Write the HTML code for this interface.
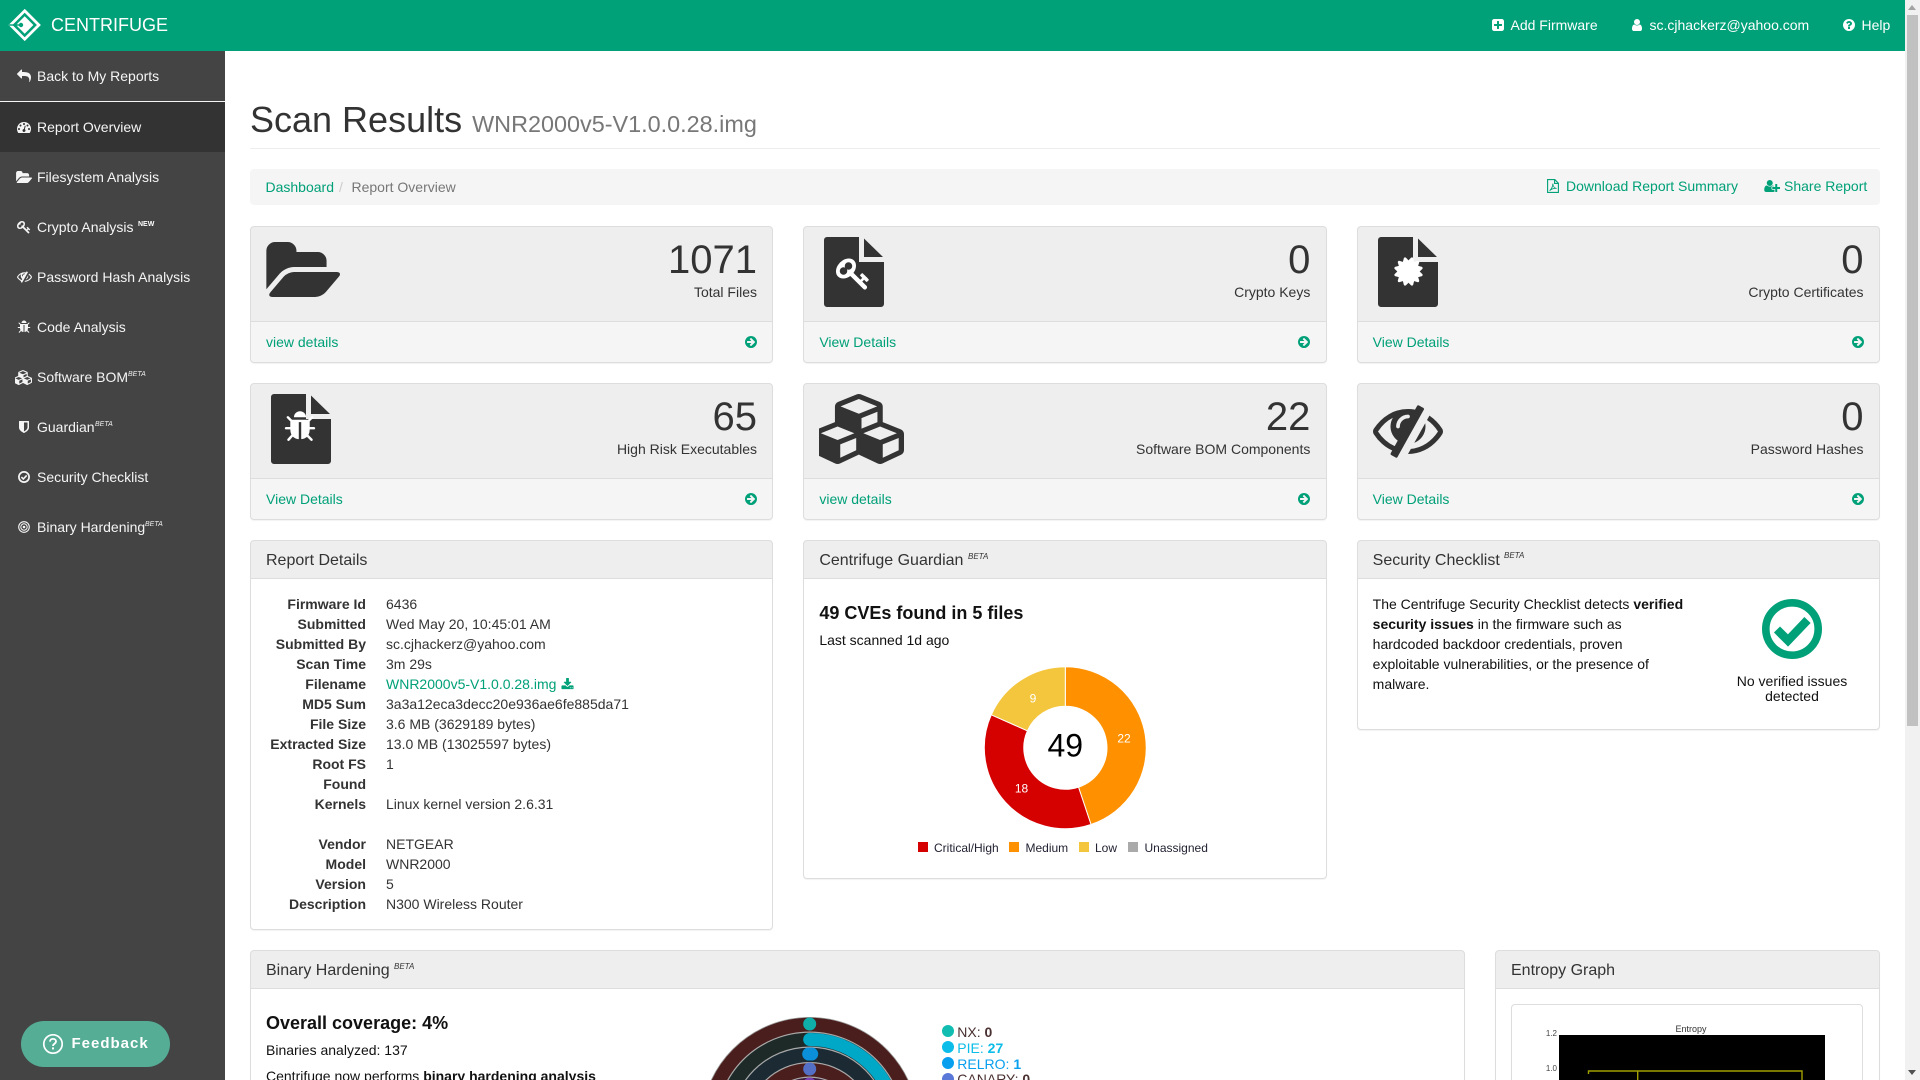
<!DOCTYPE html>
<html lang="en"><head><meta charset="utf-8"><title>Centrifuge - Scan Results</title>
<style>
html,body{margin:0;padding:0;background:#fff;width:1920px;height:1080px;overflow:hidden}
#root{position:absolute;left:0;top:0;width:1920px;height:1080px;overflow:hidden;font:14px/20px "Liberation Sans",sans-serif;color:#333}
.a{position:absolute}
.t{position:absolute;white-space:nowrap;line-height:20px}
.r{text-align:right}
.s{position:absolute;display:block}
.g{color:#00a078}
.w{color:#f5f5f5}
.p{position:absolute;box-sizing:border-box;border:1px solid #ddd;border-radius:4px;box-shadow:0 1px 1px rgba(0,0,0,.05);background:#fff}
.st{height:137px;width:523.33px;background:linear-gradient(#eee 0,#eee 94px,#ddd 94px,#ddd 95px,#f5f5f5 95px)}
.hd{background:linear-gradient(#eee 0,#eee 37px,#ddd 37px,#ddd 38px,#fff 38px)}
.n{position:absolute;font-size:40px;line-height:40px;text-align:right;white-space:nowrap;color:#333}
.h{position:absolute;font-size:16px;line-height:20px;white-space:nowrap;color:#333}
.b{position:absolute;font:italic 8px/10px "Liberation Sans",sans-serif;color:#333;white-space:nowrap}
.sb{position:absolute;font:italic 7px/9px "Liberation Sans",sans-serif;color:#eee;white-space:nowrap}
.dt{position:absolute;left:250px;width:116px;text-align:right;font-weight:700;line-height:20px;white-space:nowrap}
.dd{position:absolute;left:386px;line-height:20px;white-space:nowrap}
</style></head><body><div id="root">

<!-- navbar -->
<div class="a" style="left:0;top:0;width:1905px;height:51px;background:#00a078"></div>
<svg class="s" style="left:0;top:0" width="60" height="50" viewBox="0 0 60 50">
<path d="M24.7 10.8 L38.9 25 L24.7 39.2 L10.5 25 Z" fill="none" stroke="#fff" stroke-width="2.8"/>
<path d="M24.7 16.3 L33.4 25 L24.7 33.7 L16 25 Z" fill="#fff"/>
<path d="M9 25 H19" stroke="#00a078" stroke-width="1.4"/>
<circle cx="21" cy="25" r="2.2" fill="#00a078"/>
</svg>
<div class="t" style="left:51px;top:15px;font-size:18px;color:#fff">CENTRIFUGE</div>

<svg class="s" style="left:1492px;top:19px" width="12" height="12" viewBox="128 128 1536 1536"><path fill="#fff" fill-rule="evenodd" d="M1408 960v-128q0-26-19-45t-45-19h-320v-320q0-26-19-45t-45-19h-128q-26 0-45 19t-19 45v320h-320q-26 0-45 19t-19 45v128q0 26 19 45t45 19h320v320q0 26 19 45t45 19h128q26 0 45-19t19-45v-320h320q26 0 45-19t19-45zm256-544v960q0 119-84.5 203.5t-203.5 84.5h-960q-119 0-203.5-84.5t-84.5-203.5v-960q0-119 84.5-203.5t203.5-84.5h960q119 0 203.5 84.5t84.5 203.5z"/></svg>
<div class="t" style="left:1510.5px;top:15px;color:#fff">Add Firmware</div>
<svg class="s" style="left:1632px;top:19px" width="10" height="12" viewBox="256 128 1280 1536"><path fill="#fff" d="M1536 1399q0 109-62.5 187t-150.5 78h-854q-88 0-150.5-78t-62.5-187q0-85 8.5-160.5t31.5-152 58.5-131 94-89 134.5-34.5q131 128 313 128t313-128q76 0 134.5 34.5t94 89 58.5 131 31.5 152 8.5 160.5zm-256-887q0 159-112.5 271.5t-271.5 112.5-271.5-112.5-112.5-271.5 112.5-271.5 271.5-112.5 271.5 112.5 112.5 271.5z"/></svg>
<div class="t" style="left:1649.5px;top:15px;color:#fff">sc.cjhackerz@yahoo.com</div>
<svg class="s" style="left:1842.5px;top:19px" width="12" height="12" viewBox="128 128 1536 1536"><path fill="#fff" fill-rule="evenodd" d="M1024 1376v-192q0-14-9-23t-23-9h-192q-14 0-23 9t-9 23v192q0 14 9 23t23 9h192q14 0 23-9t9-23zm256-672q0-88-55.5-163t-138.5-116-170-41q-243 0-371 213-15 24 8 42l132 100q7 6 19 6 16 0 25-12 53-68 86-92 34-24 86-24 48 0 85.5 26t37.5 59q0 38-20 61t-68 45q-63 28-115.5 86.5t-52.5 125.5v36q0 14 9 23t23 9h192q14 0 23-9t9-23q0-19 21.5-49.5t54.5-49.5q32-18 49-28.5t46-35 44.5-48 28-60.5 12.5-81zm384 192q0 209-103 385.5t-279.5 279.5-385.5 103-385.5-103-279.5-279.5-103-385.5 103-385.5 279.5-279.5 385.5-103 385.5 103 279.5 279.5 103 385.5z"/></svg>
<div class="t" style="left:1861.5px;top:15px;color:#fff">Help</div>

<!-- scrollbar -->
<div class="a" style="left:1905px;top:0;width:15px;height:1080px;background:#f1f1f1"></div>
<div class="a" style="left:1907px;top:15px;width:11px;height:711px;background:#c1c1c1"></div>
<div class="a" style="left:1908px;top:5px;width:0;height:0;border:4.5px solid transparent;border-top:0;border-bottom:5px solid #a3a3a3"></div>
<div class="a" style="left:1908px;top:1070px;width:0;height:0;border:4.5px solid transparent;border-bottom:0;border-top:5px solid #505050"></div>

<!-- sidebar -->
<div class="a" style="left:0;top:51px;width:225px;height:1029px;background:#444"></div>
<div class="a" style="left:0;top:101px;width:225px;height:1px;background:#f5f5f5"></div>
<div class="a" style="left:0;top:102px;width:225px;height:50px;background:#333"></div>

<svg class="s" style="left:17px;top:69px" width="14" height="14" viewBox="0 0 1792 1792"><path fill="#f5f5f5" d="M1792 1120q0 166-127 451-3 7-10.5 24t-13.5 30-13 22q-12 17-28 17-15 0-23.5-10t-8.5-25q0-9 2.5-26.5t2.5-23.5q5-68 5-123 0-101-17.5-181t-48.5-138.5-80-101-105.5-69.5-133-42.5-154-21.5-175.5-6h-224v256q0 26-19 45t-45 19-45-19l-512-512q-19-19-19-45t19-45l512-512q19-19 45-19t45 19 19 45v256h224q713 0 875 403 53 134 53 333z"/></svg>
<div class="t w" style="left:37px;top:66px">Back to My Reports</div>

<svg class="s" style="left:17px;top:120px" width="14" height="14" viewBox="0 0 1792 1792"><path fill="#f5f5f5" fill-rule="evenodd" d="M384 1152q0-53-37.5-90.5t-90.5-37.5-90.5 37.5-37.5 90.5 37.5 90.5 90.5 37.5 90.5-37.5 37.5-90.5zm192-448q0-53-37.5-90.5t-90.5-37.5-90.5 37.5-37.5 90.5 37.5 90.5 90.5 37.5 90.5-37.5 37.5-90.5zm428 481l101-382q6-26-7.5-48.5t-38.5-29.5-48 6.5-30 39.5l-101 382q-60 5-107 43.5t-63 98.5q-20 77 20 146t117 89 146-20 89-117q16-60-6-117t-72-91zm660-33q0-53-37.5-90.5t-90.5-37.5-90.5 37.5-37.5 90.5 37.5 90.5 90.5 37.5 90.5-37.5 37.5-90.5zm-640-640q0-53-37.5-90.5t-90.5-37.5-90.5 37.5-37.5 90.5 37.5 90.5 90.5 37.5 90.5-37.5 37.5-90.5zm448 192q0-53-37.5-90.5t-90.5-37.5-90.5 37.5-37.5 90.5 37.5 90.5 90.5 37.5 90.5-37.5 37.5-90.5zm320 448q0 261-141 483-19 29-54 29h-1402q-35 0-54-29-141-221-141-483 0-182 71-348t191-286 286-191 348-71 348 71 286 191 191 286 71 348z"/></svg>
<div class="t w" style="left:37px;top:117px">Report Overview</div>

<svg class="s" style="left:16px;top:171px" width="16" height="12" viewBox="55 128 1888 1408" preserveAspectRatio="none"><path fill="#f5f5f5" d="M1943 952q0 31-31 66l-336 396q-43 51-120.5 86.5t-143.5 35.5h-1088q-34 0-60.5-13t-26.5-43q0-31 31-66l336-396q43-51 120.5-86.5t143.5-35.5h1088q34 0 60.5 13t26.5 43zm-343-344v160h-832q-94 0-197 47.5t-164 119.5l-337 396-5 6q0-4-.5-12.5t-.5-12.5v-960q0-92 66-158t158-66h320q92 0 158 66t66 158v32h544q92 0 158 66t66 158z"/></svg>
<div class="t w" style="left:37px;top:167px">Filesystem Analysis</div>

<svg class="s" style="left:17px;top:220px" width="14" height="14" viewBox="0 0 1792 1792"><path fill="#f5f5f5" fill-rule="evenodd" d="M832 512q0-80-56-136t-136-56-136 56-56 136q0 42 19 83-41-19-83-19-80 0-136 56t-56 136 56 136 136 56 136-56 56-136q0-42-19-83 41 19 83 19 80 0 136-56t56-136zm851 704q0 17-49 66t-66 49q-9 0-28.5-16t-36.5-33-38.5-40-24.5-26l-96 96 220 220q28 28 28 68 0 42-39 81t-81 39q-40 0-68-28l-671-671q-176 131-365 131-163 0-265.5-102.5t-102.5-265.5q0-160 95-313t248-248 313-95q163 0 265.5 102.5t102.5 265.5q0 189-131 365l355 355 96-96q-3-3-26-24.5t-40-38.5-33-36.5-16-28.5q0-17 49-66t66-49q13 0 23 10 6 6 46 44.5t82 79.5 86.5 86 73 78 28.5 41z"/></svg>
<div class="t w" style="left:37px;top:217px">Crypto Analysis</div>
<div class="sb" style="left:138px;top:220px;font-style:normal;font-weight:700;color:#fff">NEW</div>

<svg class="s" style="left:16.5px;top:269px" width="15" height="15" viewBox="0 0 1792 1792"><path fill="#f5f5f5" d="M555 1335l78-141q-87-63-136-159t-49-203q0-121 61-225-229 117-381 353 167 258 427 375zm389-759q0-20-14-34t-34-14q-125 0-214.5 89.5t-89.5 214.5q0 20 14 34t34 14 34-14 14-34q0-86 61-147t147-61q20 0 34-14t14-34zm363-191q0 7-1 9-106 189-316 567t-315 566l-49 89q-10 16-28 16-12 0-134-70-16-10-16-28 0-12 44-87-143-65-263.5-173t-208.5-245q-20-31-20-69t20-69q153-235 380-371t496-136q89 0 180 17l54-97q10-16 28-16 5 0 18 6t31 15.5 33 18.5 31.5 18.5 19.5 11.5q16 10 16 27zm37 447q0 139-79 253.5t-209 164.5l280-502q8 45 8 84zm448 128q0 35-20 69-39 64-109 145-150 172-347.5 267t-419.5 95l74-132q212-18 392.5-137t301.5-307q-115-179-282-294l63-112q95 64 182.5 153t144.5 184q20 34 20 69z"/></svg>
<div class="t w" style="left:37px;top:267px">Password Hash Analysis</div>

<svg class="s" style="left:17px;top:320px" width="14" height="14" viewBox="0 0 1792 1792"><path fill="#f5f5f5" d="M1696 960q0 26-19 45t-45 19h-224q0 171-67 290l208 209q19 19 19 45t-19 45q-18 19-45 19t-45-19l-198-197q-5 5-15 13t-42 28.5-65 36.5-82 29-97 13v-896h-128v896q-51 0-101.5-13.5t-87-33-66-39-43.5-32.5l-15-14-183 207q-20 21-48 21-24 0-43-16-19-18-20.5-44.5t15.5-46.5l202-227q-58-114-58-274h-224q-26 0-45-19t-19-45 19-45 45-19h224v-294l-173-173q-19-19-19-45t19-45 45-19 45 19l173 173h844l173-173q19-19 45-19t45 19 19 45-19 45l-173 173v294h224q26 0 45 19t19 45zm-480-576h-640q0-133 93.5-226.5t226.5-93.5 226.5 93.5 93.5 226.5z"/></svg>
<div class="t w" style="left:37px;top:317px">Code Analysis</div>

<svg class="s" style="left:15px;top:370px" width="17" height="15" viewBox="0 0 2048 1792"><path fill="#f5f5f5" fill-rule="evenodd" d="M512 1632l384-192v-314l-384 164v342zm-64-454l404-173-404-173-404 173zm1088 454l384-192v-314l-384 164v342zm-64-454l404-173-404-173-404 173zm-448-293l384-165v-266l-384 164v267zm-64-379l441-189-441-189-441 189zm1088 518v416q0 36-19 67t-52 47l-448 224q-25 14-57 14t-57-14l-448-224q-4-2-7-4-2 2-7 4l-448 224q-25 14-57 14t-57-14l-448-224q-33-16-52-47t-19-67v-416q0-38 21.5-70t56.5-48l434-186v-400q0-38 21.5-70t56.5-48l448-192q23-10 50-10t50 10l448 192q35 16 56.5 48t21.5 70v400l434 186q36 16 57 48t21 70z"/></svg>
<div class="t w" style="left:37px;top:367px">Software BOM</div>
<div class="sb" style="left:128px;top:370px">BETA</div>

<svg class="s" style="left:17px;top:420px" width="14" height="14" viewBox="0 0 1792 1792"><path fill="#f5f5f5" fill-rule="evenodd" d="M1344 960v-640h-448v1137q119-63 213-137 235-184 235-360zm192-768v768q0 86-33.5 170.5t-83 150-118 127.5-126.5 103-121 77.5-89.5 49.5-42.5 20q-12 6-26 6t-26-6q-16-7-42.5-20t-89.5-49.5-121-77.5-126.5-103-118-127.5-83-150-33.5-170.5v-768q0-26 19-45t45-19h1152q26 0 45 19t19 45z"/></svg>
<div class="t w" style="left:37px;top:417px">Guardian</div>
<div class="sb" style="left:95px;top:420px">BETA</div>

<svg class="s" style="left:18px;top:471px" width="12" height="12" viewBox="0 0 12 12"><circle cx="6" cy="6" r="5.1" fill="none" stroke="#f5f5f5" stroke-width="1.7"/><path d="M3.4 6.1 L5.3 8 L8.7 4.4" fill="none" stroke="#f5f5f5" stroke-width="1.6"/></svg>
<div class="t w" style="left:37px;top:467px">Security Checklist</div>

<svg class="s" style="left:18px;top:521px" width="12" height="12" viewBox="0 0 12 12"><circle cx="6" cy="6" r="5.3" fill="none" stroke="#f5f5f5" stroke-width="1.1"/><circle cx="6" cy="6" r="3.2" fill="none" stroke="#f5f5f5" stroke-width="1"/><circle cx="6" cy="6" r="1.3" fill="#f5f5f5"/></svg>
<div class="t w" style="left:37px;top:517px">Binary Hardening</div>
<div class="sb" style="left:145px;top:520px">BETA</div>

<!-- feedback -->
<div class="a" style="left:21px;top:1021px;width:149px;height:46px;border-radius:23px;background:#55ad96"></div>
<svg class="s" style="left:42px;top:1033px" width="22" height="22" viewBox="0 0 22 22"><circle cx="11" cy="11" r="9.2" fill="none" stroke="#fff" stroke-width="1.7"/><path d="M8 8.6c0-1.8 1.4-2.7 3-2.7s3 1 3 2.5c0 2.4-3 2.3-3 4.6" fill="none" stroke="#fff" stroke-width="1.8"/><rect x="10" y="14.4" width="2" height="2" fill="#fff"/></svg>
<div class="t" style="left:71.5px;top:1034px;font-size:15px;font-weight:700;letter-spacing:1px;color:#fff">Feedback</div>

<!-- title -->
<div class="a" style="left:250px;top:100px;font-size:36px;line-height:40px;white-space:nowrap">Scan Results <span style="font-size:23.4px;color:#777">WNR2000v5-V1.0.0.28.img</span></div>
<div class="a" style="left:250px;top:148px;width:1630px;height:1px;background:#eee"></div>

<!-- breadcrumb -->
<div class="a" style="left:250px;top:169px;width:1630px;height:36px;background:#f5f5f5;border-radius:4px"></div>
<div class="t g" style="left:265.5px;top:177px">Dashboard</div>
<div class="t" style="left:339px;top:177px;color:#ccc">/</div>
<div class="t" style="left:351.5px;top:177px;color:#777">Report Overview</div>
<svg class="s" style="left:1547px;top:179px" width="12" height="14" viewBox="0 0 12 14"><path d="M.6.6H7.8L11.4 4.2V13.4H.6Z M7.6.8V4.4H11.2" fill="none" stroke="#00a078" stroke-width="1.1"/><path d="M2.6 11.6C4.6 10 6 7 5.8 4.6 6 7.4 7.6 9.2 9.6 9.4 7.4 9.2 4.6 10 2.6 11.6Z" fill="none" stroke="#00a078" stroke-width=".9"/></svg>
<div class="t g" style="left:1566px;top:176px">Download Report Summary</div>
<svg class="s" style="left:1763.5px;top:179px" width="16.5" height="14" viewBox="0 0 2048 1792"><path fill="#00a078" d="M704 896q-159 0-271.5-112.5t-112.5-271.5 112.5-271.5 271.5-112.5 271.5 112.5 112.5 271.5-112.5 271.5-271.5 112.5zm960 128h352q13 0 22.5 9.5t9.5 22.5v192q0 13-9.5 22.5t-22.5 9.5h-352v352q0 13-9.5 22.5t-22.5 9.5h-192q-13 0-22.5-9.5t-9.5-22.5v-352h-352q-13 0-22.5-9.5t-9.5-22.5v-192q0-13 9.5-22.5t22.5-9.5h352v-352q0-13 9.5-22.5t22.5-9.5h192q13 0 22.5 9.5t9.5 22.5v352zm-736 224q0 52 38 90t90 38h256v238q-68 50-171 50h-874q-121 0-194-69t-73-190q0-53 3.5-103.5t14-109 26.5-108.5 43-97.5 62-81 85.5-53.5 111.5-20q19 0 39 17 79 61 154.5 91.5t164.5 30.5 164.5-30.5 154.5-91.5q20-17 39-17 132 0 217 96h-223q-52 0-90 38t-38 90v192z"/></svg>
<div class="t g" style="left:1784px;top:176px">Share Report</div>

<!-- stat panels -->
<div class="p st" style="left:250px;top:226px"></div>
<div class="p st" style="left:803.33px;top:226px"></div>
<div class="p st" style="left:1356.67px;top:226px"></div>
<div class="p st" style="left:250px;top:383px"></div>
<div class="p st" style="left:803.33px;top:383px"></div>
<div class="p st" style="left:1356.67px;top:383px"></div>

<svg class="s" style="left:266px;top:242px" width="74" height="55" viewBox="55 128 1888 1408" preserveAspectRatio="none"><path fill="#333" d="M1943 952q0 31-31 66l-336 396q-43 51-120.5 86.5t-143.5 35.5h-1088q-34 0-60.5-13t-26.5-43q0-31 31-66l336-396q43-51 120.5-86.5t143.5-35.5h1088q34 0 60.5 13t26.5 43zm-343-344v160h-832q-94 0-197 47.5t-164 119.5l-337 396-5 6q0-4-.5-12.5t-.5-12.5v-960q0-92 66-158t158-66h320q92 0 158 66t66 158v32h544q92 0 158 66t66 158z"/></svg>
<div class="n" style="right:1163px;top:240px">1071</div>
<div class="t r" style="right:1163px;top:282px">Total Files</div>
<div class="t g" style="left:266px;top:332px">view details</div>
<svg class="s" style="left:745px;top:336px" width="12" height="12" viewBox="128 128 1536 1536"><path fill="#00a078" fill-rule="evenodd" d="M1413 896q0-27-18-45l-91-91-362-362q-18-18-45-18t-45 18l-91 91q-18 18-18 45t18 45l189 189h-502q-26 0-45 19t-19 45v128q0 26 19 45t45 19h502l-189 189q-19 19-19 45t19 45l91 91q18 18 45 18t45-18l362-362 91-91q18-18 18-45zm251 0q0 209-103 385.5t-279.5 279.5-385.5 103-385.5-103-279.5-279.5-103-385.5 103-385.5 279.5-279.5 385.5-103 385.5 103 279.5 279.5 103 385.5z"/></svg>

<svg class="s" style="left:824px;top:237px" width="60" height="70" viewBox="0 0 60 70"><path fill="#333" d="M3 0H35V25H60V67a3 3 0 0 1-3 3H3a3 3 0 0 1-3-3V3a3 3 0 0 1 3-3Z"/><path fill="#333" d="M40 1.5 59 20H40Z"/></svg>
<svg class="s" style="left:836px;top:256px" width="35" height="35" viewBox="0 0 1792 1792"><path fill="#fff" fill-rule="evenodd" d="M832 512q0-80-56-136t-136-56-136 56-56 136q0 42 19 83-41-19-83-19-80 0-136 56t-56 136 56 136 136 56 136-56 56-136q0-42-19-83 41 19 83 19 80 0 136-56t56-136zm851 704q0 17-49 66t-66 49q-9 0-28.5-16t-36.5-33-38.5-40-24.5-26l-96 96 220 220q28 28 28 68 0 42-39 81t-81 39q-40 0-68-28l-671-671q-176 131-365 131-163 0-265.5-102.5t-102.5-265.5q0-160 95-313t248-248 313-95q163 0 265.5 102.5t102.5 265.5q0 189-131 365l355 355 96-96q-3-3-26-24.5t-40-38.5-33-36.5-16-28.5q0-17 49-66t66-49q13 0 23 10 6 6 46 44.5t82 79.5 86.5 86 73 78 28.5 41z"/></svg>
<div class="n" style="right:609.67px;top:240px">0</div>
<div class="t r" style="right:609.67px;top:282px">Crypto Keys</div>
<div class="t g" style="left:819.33px;top:332px">View Details</div>
<svg class="s" style="left:1298.2px;top:336px" width="12" height="12" viewBox="128 128 1536 1536"><path fill="#00a078" fill-rule="evenodd" d="M1413 896q0-27-18-45l-91-91-362-362q-18-18-45-18t-45 18l-91 91q-18 18-18 45t18 45l189 189h-502q-26 0-45 19t-19 45v128q0 26 19 45t45 19h502l-189 189q-19 19-19 45t19 45l91 91q18 18 45 18t45-18l362-362 91-91q18-18 18-45zm251 0q0 209-103 385.5t-279.5 279.5-385.5 103-385.5-103-279.5-279.5-103-385.5 103-385.5 279.5-279.5 385.5-103 385.5 103 279.5 279.5 103 385.5z"/></svg>

<svg class="s" style="left:1378px;top:237px" width="60" height="70" viewBox="0 0 60 70"><path fill="#333" d="M3 0H35V25H60V67a3 3 0 0 1-3 3H3a3 3 0 0 1-3-3V3a3 3 0 0 1 3-3Z"/><path fill="#333" d="M40 1.5 59 20H40Z"/></svg>
<svg class="s" style="left:1391.5px;top:254.5px" width="33" height="33" viewBox="0 0 1792 1792"><path fill="#fff" d="M1504 896l138 135q30 28 20 70-12 41-52 51l-188 48 53 186q12 41-19 70-29 31-70 19l-186-53-48 188q-10 40-51 52-12 2-19 2-31 0-51-22l-135-138-135 138q-28 30-70 20-41-11-51-52l-48-188-186 53q-41 12-70-19-31-29-19-70l53-186-188-48q-40-10-52-51-10-42 20-70l138-135-138-135q-30-28-20-70 12-41 52-51l188-48-53-186q-12-41 19-70 29-31 70-19l186 53 48-188q10-41 51-51 41-12 70 19l135 139 135-139q29-30 70-19 41 10 51 51l48 188 186-53q41-12 70 19 31 29 19 70l-53 186 188 48q40 10 52 51 10 42-20 70z"/></svg>
<div class="n" style="right:56.5px;top:240px">0</div>
<div class="t r" style="right:56.5px;top:282px">Crypto Certificates</div>
<div class="t g" style="left:1372.67px;top:332px">View Details</div>
<svg class="s" style="left:1852px;top:336px" width="12" height="12" viewBox="128 128 1536 1536"><path fill="#00a078" fill-rule="evenodd" d="M1413 896q0-27-18-45l-91-91-362-362q-18-18-45-18t-45 18l-91 91q-18 18-18 45t18 45l189 189h-502q-26 0-45 19t-19 45v128q0 26 19 45t45 19h502l-189 189q-19 19-19 45t19 45l91 91q18 18 45 18t45-18l362-362 91-91q18-18 18-45zm251 0q0 209-103 385.5t-279.5 279.5-385.5 103-385.5-103-279.5-279.5-103-385.5 103-385.5 279.5-279.5 385.5-103 385.5 103 279.5 279.5 103 385.5z"/></svg>

<svg class="s" style="left:271px;top:394px" width="60" height="70" viewBox="0 0 60 70"><path fill="#333" d="M3 0H35V25H60V67a3 3 0 0 1-3 3H3a3 3 0 0 1-3-3V3a3 3 0 0 1 3-3Z"/><path fill="#333" d="M40 1.5 59 20H40Z"/></svg>
<svg class="s" style="left:283px;top:410px" width="34" height="34" viewBox="0 0 1792 1792"><path fill="#fff" d="M1696 960q0 26-19 45t-45 19h-224q0 171-67 290l208 209q19 19 19 45t-19 45q-18 19-45 19t-45-19l-198-197q-5 5-15 13t-42 28.5-65 36.5-82 29-97 13v-896h-128v896q-51 0-101.5-13.5t-87-33-66-39-43.5-32.5l-15-14-183 207q-20 21-48 21-24 0-43-16-19-18-20.5-44.5t15.5-46.5l202-227q-58-114-58-274h-224q-26 0-45-19t-19-45 19-45 45-19h224v-294l-173-173q-19-19-19-45t19-45 45-19 45 19l173 173h844l173-173q19-19 45-19t45 19 19 45-19 45l-173 173v294h224q26 0 45 19t19 45zm-480-576h-640q0-133 93.5-226.5t226.5-93.5 226.5 93.5 93.5 226.5z"/></svg>
<div class="n" style="right:1163px;top:397px">65</div>
<div class="t r" style="right:1163px;top:439px">High Risk Executables</div>
<div class="t g" style="left:266px;top:489px">View Details</div>
<svg class="s" style="left:745px;top:493px" width="12" height="12" viewBox="128 128 1536 1536"><path fill="#00a078" fill-rule="evenodd" d="M1413 896q0-27-18-45l-91-91-362-362q-18-18-45-18t-45 18l-91 91q-18 18-18 45t18 45l189 189h-502q-26 0-45 19t-19 45v128q0 26 19 45t45 19h502l-189 189q-19 19-19 45t19 45l91 91q18 18 45 18t45-18l362-362 91-91q18-18 18-45zm251 0q0 209-103 385.5t-279.5 279.5-385.5 103-385.5-103-279.5-279.5-103-385.5 103-385.5 279.5-279.5 385.5-103 385.5 103 279.5 279.5 103 385.5z"/></svg>

<svg class="s" style="left:819px;top:394px" width="85" height="70" viewBox="0 0 2048 1792" preserveAspectRatio="none"><path fill="#333" fill-rule="evenodd" d="M512 1632l384-192v-314l-384 164v342zm-64-454l404-173-404-173-404 173zm1088 454l384-192v-314l-384 164v342zm-64-454l404-173-404-173-404 173zm-448-293l384-165v-266l-384 164v267zm-64-379l441-189-441-189-441 189zm1088 518v416q0 36-19 67t-52 47l-448 224q-25 14-57 14t-57-14l-448-224q-4-2-7-4-2 2-7 4l-448 224q-25 14-57 14t-57-14l-448-224q-33-16-52-47t-19-67v-416q0-38 21.5-70t56.5-48l434-186v-400q0-38 21.5-70t56.5-48l448-192q23-10 50-10t50 10l448 192q35 16 56.5 48t21.5 70v400l434 186q36 16 57 48t21 70z"/></svg>
<div class="n" style="right:609.67px;top:397px">22</div>
<div class="t r" style="right:609.67px;top:439px">Software BOM Components</div>
<div class="t g" style="left:819.33px;top:489px">view details</div>
<svg class="s" style="left:1298.2px;top:493px" width="12" height="12" viewBox="128 128 1536 1536"><path fill="#00a078" fill-rule="evenodd" d="M1413 896q0-27-18-45l-91-91-362-362q-18-18-45-18t-45 18l-91 91q-18 18-18 45t18 45l189 189h-502q-26 0-45 19t-19 45v128q0 26 19 45t45 19h502l-189 189q-19 19-19 45t19 45l91 91q18 18 45 18t45-18l362-362 91-91q18-18 18-45zm251 0q0 209-103 385.5t-279.5 279.5-385.5 103-385.5-103-279.5-279.5-103-385.5 103-385.5 279.5-279.5 385.5-103 385.5 103 279.5 279.5 103 385.5z"/></svg>

<svg class="s" style="left:1372.5px;top:394px" width="70" height="70" viewBox="0 0 1792 1792"><path fill="#333" d="M555 1335l78-141q-87-63-136-159t-49-203q0-121 61-225-229 117-381 353 167 258 427 375zm389-759q0-20-14-34t-34-14q-125 0-214.5 89.5t-89.5 214.5q0 20 14 34t34 14 34-14 14-34q0-86 61-147t147-61q20 0 34-14t14-34zm363-191q0 7-1 9-106 189-316 567t-315 566l-49 89q-10 16-28 16-12 0-134-70-16-10-16-28 0-12 44-87-143-65-263.5-173t-208.5-245q-20-31-20-69t20-69q153-235 380-371t496-136q89 0 180 17l54-97q10-16 28-16 5 0 18 6t31 15.5 33 18.5 31.5 18.5 19.5 11.5q16 10 16 27zm37 447q0 139-79 253.5t-209 164.5l280-502q8 45 8 84zm448 128q0 35-20 69-39 64-109 145-150 172-347.5 267t-419.5 95l74-132q212-18 392.5-137t301.5-307q-115-179-282-294l63-112q95 64 182.5 153t144.5 184q20 34 20 69z"/></svg>
<div class="n" style="right:56.5px;top:397px">0</div>
<div class="t r" style="right:56.5px;top:439px">Password Hashes</div>
<div class="t g" style="left:1372.67px;top:489px">View Details</div>
<svg class="s" style="left:1852px;top:493px" width="12" height="12" viewBox="128 128 1536 1536"><path fill="#00a078" fill-rule="evenodd" d="M1413 896q0-27-18-45l-91-91-362-362q-18-18-45-18t-45 18l-91 91q-18 18-18 45t18 45l189 189h-502q-26 0-45 19t-19 45v128q0 26 19 45t45 19h502l-189 189q-19 19-19 45t19 45l91 91q18 18 45 18t45-18l362-362 91-91q18-18 18-45zm251 0q0 209-103 385.5t-279.5 279.5-385.5 103-385.5-103-279.5-279.5-103-385.5 103-385.5 279.5-279.5 385.5-103 385.5 103 279.5 279.5 103 385.5z"/></svg>

<!-- Report details -->
<div class="p hd" style="left:250px;top:540px;width:523.33px;height:390px"></div>
<div class="h" style="left:266px;top:551px">Report Details</div>
<div class="dt" style="top:594px">Firmware Id</div><div class="dd" style="top:594px">6436</div>
<div class="dt" style="top:614px">Submitted</div><div class="dd" style="top:614px">Wed May 20, 10:45:01 AM</div>
<div class="dt" style="top:634px">Submitted By</div><div class="dd" style="top:634px">sc.cjhackerz@yahoo.com</div>
<div class="dt" style="top:654px">Scan Time</div><div class="dd" style="top:654px">3m 29s</div>
<div class="dt" style="top:674px">Filename</div><div class="dd g" style="top:674px">WNR2000v5-V1.0.0.28.img</div>
<svg class="s" style="left:560.5px;top:678px" width="13" height="13" viewBox="0 0 1792 1792"><path fill="#00a078" d="M1344 1344q0-26-19-45t-45-19-45 19-19 45 19 45 45 19 45-19 19-45zm256 0q0-26-19-45t-45-19-45 19-19 45 19 45 45 19 45-19 19-45zm128-224v320q0 40-28 68t-68 28h-1472q-40 0-68-28t-28-68v-320q0-40 28-68t68-28h465l135 136q58 56 136 56t136-56l136-136h464q40 0 68 28t28 68zm-325-569q17 41-14 70l-448 448q-18 19-45 19t-45-19l-448-448q-31-29-14-70 17-39 59-39h256v-448q0-26 19-45t45-19h256q26 0 45 19t19 45v448h256q42 0 59 39z"/></svg>
<div class="dt" style="top:694px">MD5 Sum</div><div class="dd" style="top:694px">3a3a12eca3decc20e936ae6fe885da71</div>
<div class="dt" style="top:714px">File Size</div><div class="dd" style="top:714px">3.6 MB (3629189 bytes)</div>
<div class="dt" style="top:734px">Extracted Size</div><div class="dd" style="top:734px">13.0 MB (13025597 bytes)</div>
<div class="dt" style="top:754px">Root FS</div><div class="dd" style="top:754px">1</div>
<div class="dt" style="top:774px">Found</div>
<div class="dt" style="top:794px">Kernels</div><div class="dd" style="top:794px">Linux kernel version 2.6.31</div>
<div class="dt" style="top:834px">Vendor</div><div class="dd" style="top:834px">NETGEAR</div>
<div class="dt" style="top:854px">Model</div><div class="dd" style="top:854px">WNR2000</div>
<div class="dt" style="top:874px">Version</div><div class="dd" style="top:874px">5</div>
<div class="dt" style="top:894px">Description</div><div class="dd" style="top:894px">N300 Wireless Router</div>

<!-- Guardian -->
<div class="p hd" style="left:803.33px;top:540px;width:523.33px;height:339px"></div>
<div class="h" style="left:819.33px;top:551px">Centrifuge Guardian</div>
<div class="b" style="left:968px;top:551.5px">BETA</div>
<div class="t" style="left:819.33px;top:603px;font-size:18px;font-weight:700;color:#111">49 CVEs found in 5 files</div>
<div class="t" style="left:819.33px;top:630px;color:#111">Last scanned 1d ago</div>
<svg class="s" style="left:960px;top:650px" width="220" height="200" viewBox="960 650 220 200">
<path fill="#ff9100" stroke="#fff" stroke-width="1" d="M1065.3 666.7 A81 81 0 0 1 1091 824.5 L1078.5 787.1 A41.5 41.5 0 0 0 1065.3 706.2 Z"/>
<path fill="#d50000" stroke="#fff" stroke-width="1" d="M1091 824.5 A81 81 0 0 1 991.3 714.8 L1027.4 730.8 A41.5 41.5 0 0 0 1078.5 787.1 Z"/>
<path fill="#f4c63d" stroke="#fff" stroke-width="1" d="M991.3 714.8 A81 81 0 0 1 1065.3 666.7 L1065.3 706.2 A41.5 41.5 0 0 0 1027.4 730.8 Z"/>
<text x="1124" y="742.5" text-anchor="middle" font-family="Liberation Sans" font-size="12" fill="#fff">22</text>
<text x="1021.5" y="792.5" text-anchor="middle" font-family="Liberation Sans" font-size="12" fill="#fff">18</text>
<text x="1033" y="702.5" text-anchor="middle" font-family="Liberation Sans" font-size="12" fill="#fff">9</text>
<text x="1065.3" y="756.5" text-anchor="middle" font-family="Liberation Sans" font-size="32" fill="#000">49</text>
</svg>
<div class="a" style="left:918px;top:842px;width:10px;height:10px;background:#d50000"></div>
<div class="t" style="left:934px;top:837.5px;font-size:12px;color:#223">Critical/High</div>
<div class="a" style="left:1009px;top:842px;width:10px;height:10px;background:#ff9100"></div>
<div class="t" style="left:1025.5px;top:837.5px;font-size:12px;color:#223">Medium</div>
<div class="a" style="left:1079px;top:842px;width:10px;height:10px;background:#f4c63d"></div>
<div class="t" style="left:1095px;top:837.5px;font-size:12px;color:#223">Low</div>
<div class="a" style="left:1128px;top:842px;width:10px;height:10px;background:#aaa"></div>
<div class="t" style="left:1144.5px;top:837.5px;font-size:12px;color:#223">Unassigned</div>

<!-- Security checklist -->
<div class="p hd" style="left:1356.67px;top:540px;width:523.33px;height:190px"></div>
<div class="h" style="left:1372.67px;top:551px">Security Checklist</div>
<div class="b" style="left:1504px;top:551px">BETA</div>
<div class="t" style="left:1372.67px;top:594px;color:#111">The Centrifuge Security Checklist detects <b>verified</b><br><b>security issues</b> in the firmware such as<br>hardcoded backdoor credentials, proven<br>exploitable vulnerabilities, or the presence of<br>malware.</div>
<svg class="s" style="left:1762px;top:599px" width="60" height="60" viewBox="0 0 60 60"><circle cx="30" cy="30" r="26.2" fill="#fff" stroke="#00a078" stroke-width="7.6"/><path d="M15 30.5 L26 41.5 L45.5 21" fill="none" stroke="#00a078" stroke-width="8.6"/></svg>
<div class="a" style="left:1712px;top:674px;width:160px;text-align:center;line-height:15px;color:#111">No verified issues<br>detected</div>

<!-- Binary hardening -->
<div class="p hd" style="left:250px;top:950px;width:1215px;height:200px"></div>
<div class="h" style="left:266px;top:961px">Binary Hardening</div>
<div class="b" style="left:394px;top:961.5px">BETA</div>
<div class="t" style="left:266px;top:1013px;font-size:18px;font-weight:700;color:#111">Overall coverage: 4%</div>
<div class="t" style="left:266px;top:1039.5px;color:#111">Binaries analyzed: 137</div>
<div class="t" style="left:266px;top:1066px;color:#111">Centrifuge now performs <b>binary hardening analysis</b></div>
<svg class="s" style="left:690px;top:1010px" width="240" height="70" viewBox="690 1010 240 70">
<circle cx="809.7" cy="1126" r="108.6" fill="#4a1e1c" stroke="#999" stroke-width=".8"/>
<circle cx="809.7" cy="1126" r="94.5" fill="#aaa"/><circle cx="809.7" cy="1126" r="93.3" fill="#1e2a28"/>
<circle cx="809.7" cy="1126" r="79.5" fill="#aaa"/><circle cx="809.7" cy="1126" r="78.3" fill="#1b2a33"/>
<circle cx="809.7" cy="1126" r="64" fill="#aaa"/><circle cx="809.7" cy="1126" r="62.8" fill="#4a1e1c"/>
<circle cx="809.7" cy="1126" r="49.5" fill="#aaa"/><circle cx="809.7" cy="1126" r="48.3" fill="#3a1e3a"/>
<circle cx="809.7" cy="1024" r="6.5" fill="#10aea9"/>
<path d="M809.7 1039.5 A86.5 86.5 0 0 1 891.5 1097.8" fill="none" stroke="#00a8c8" stroke-width="13" stroke-linecap="round"/>
<path d="M808.7 1054 A72 72 0 0 1 811.7 1054" fill="none" stroke="#0a8fd8" stroke-width="13" stroke-linecap="round"/>
<circle cx="809.7" cy="1069" r="6.5" fill="#5470c6"/>
<circle cx="809.7" cy="1084" r="6.5" fill="#7a3fb0"/>
</svg>
<div class="a" style="left:941.7px;top:1025px;width:12px;height:12px;border-radius:50%;background:#10bdb0"></div>
<div class="a" style="left:941.7px;top:1041px;width:12px;height:12px;border-radius:50%;background:#0bbde8"></div>
<div class="a" style="left:941.7px;top:1057px;width:12px;height:12px;border-radius:50%;background:#089fee"></div>
<div class="a" style="left:941.7px;top:1073px;width:12px;height:12px;border-radius:50%;background:#5a78d8"></div>
<div class="t" style="left:957.3px;top:1022px;color:#4a3030">NX: <b>0</b></div>
<div class="t" style="left:957.3px;top:1038px;color:#0bbde8">PIE: <b>27</b></div>
<div class="t" style="left:957.3px;top:1054px;color:#089fee">RELRO: <b>1</b></div>
<div class="t" style="left:957.3px;top:1068.5px;color:#4a3030">CANARY: <b>0</b></div>

<!-- Entropy -->
<div class="p hd" style="left:1495px;top:950px;width:385px;height:200px"></div>
<div class="h" style="left:1511px;top:961px">Entropy Graph</div>
<div class="a" style="left:1511px;top:1004px;width:352px;height:120px;box-sizing:border-box;border:1px solid #ddd;border-radius:4px"></div>
<div class="a" style="left:1558.7px;top:1034.7px;width:266.3px;height:60px;background:#000"></div>
<svg class="s" style="left:1558px;top:1060px" width="268" height="20" viewBox="1558 1060 268 20"><path d="M1588.5 1074 V1071 H1802 V1080 M1637.7 1071 V1080" fill="none" stroke="#a0a000" stroke-width="1.4"/></svg>
<div class="a" style="left:1640px;top:1023px;width:102px;text-align:center;font-size:9px;line-height:12px;color:#333">Entropy</div>
<div class="a" style="left:1540px;top:1029px;width:17px;text-align:right;font-size:8px;line-height:10px;color:#444">1.2</div>
<div class="a" style="left:1540px;top:1063.5px;width:17px;text-align:right;font-size:8px;line-height:10px;color:#444">1.0</div>

</div></body></html>
